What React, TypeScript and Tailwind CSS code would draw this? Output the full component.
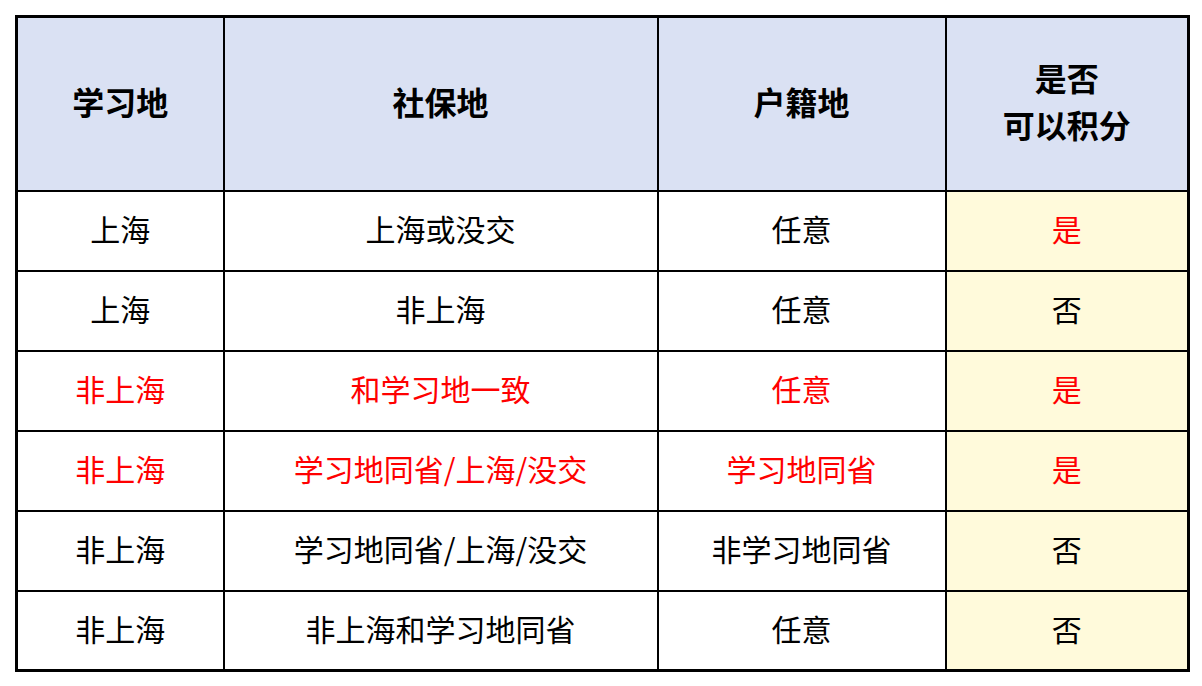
const rows: { cells: string[]; red: boolean[] }[] = [
  { cells: ["上海", "上海或没交", "任意", "是"], red: [false, false, false, true] },
  { cells: ["上海", "非上海", "任意", "否"], red: [false, false, false, false] },
  { cells: ["非上海", "和学习地一致", "任意", "是"], red: [true, true, true, true] },
  { cells: ["非上海", "学习地同省/上海/没交", "学习地同省", "是"], red: [true, true, true, true] },
  { cells: ["非上海", "学习地同省/上海/没交", "非学习地同省", "否"], red: [false, false, false, false] },
  { cells: ["非上海", "非上海和学习地同省", "任意", "否"], red: [false, false, false, false] },
];

export default function App() {
  return (
    <div
      className="h-[686px] w-[1202px] bg-white pl-[15px] pt-[15px]"
      style={{ fontFamily: '"Microsoft YaHei", "Noto Sans CJK SC", sans-serif' }}
    >
      <table className="w-[1172px] table-fixed border-collapse border-[3px] border-black text-[30px] text-black">
        <colgroup>
          <col className="w-[207px]" />
          <col className="w-[434px]" />
          <col className="w-[288px]" />
          <col className="w-[243px]" />
        </colgroup>
        <thead>
          <tr className="h-[174px] bg-[#dae1f3] text-[32px] font-bold">
            <th className="border-2 border-black pb-[5px]">学习地</th>
            <th className="border-2 border-black pb-[5px]">社保地</th>
            <th className="border-2 border-black pb-[5px]">户籍地</th>
            <th className="border-2 border-black pb-[5px] leading-[47px]">
              是否
              <br />
              可以积分
            </th>
          </tr>
        </thead>
        <tbody>
          {rows.map((row, i) => (
            <tr key={i} className="h-[80px]">
              {row.cells.map((c, j) => (
                <td
                  key={j}
                  className={`border-2 border-black p-0 pb-[5px] text-center leading-[40px] ${j === 3 ? "bg-[#fffadb]" : ""} ${
                    row.red[j] ? "text-[#ff0000]" : ""
                  }`}
                >
                  {c}
                </td>
              ))}
            </tr>
          ))}
        </tbody>
      </table>
    </div>
  );
}
